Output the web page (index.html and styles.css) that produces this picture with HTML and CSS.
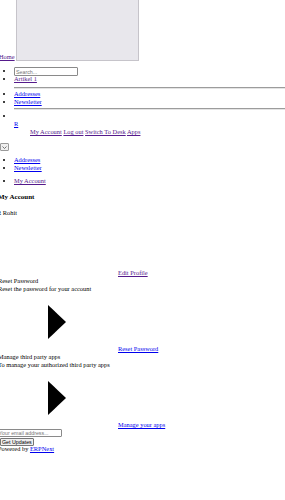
FILE: index.html
```html
<!DOCTYPE html>
<html lang="en">

<head>
  <meta charset="UTF-8" />
  <meta name="viewport" content="width=device-width, initial-scale=1.0" />
  <title>My Account</title>
  <link rel="stylesheet" href="styles.css">
</head>

<body>

  <div class="top">
    <a href="#" class="visited home">Home</a>
    <div class="banner"></div>
  </div>

  <ul class="nav first">
    <li class="search-item"><input type="text" class="search" placeholder="Search..." /></li>
    <li><a href="#" class="visited">Artikel 1</a></li>
  </ul>
  <div class="rule"></div>

  <ul class="nav links">
    <li><a href="#">Addresses</a></li>
    <li><a href="#">Newsletter</a></li>
  </ul>
  <div class="rule second"></div>

  <ul class="nav user">
    <li>
      <br>
      <a href="#">R</a>
      <ul class="user-menu">
        <li>
          <a href="#" class="visited">My Account</a>
          <a href="#" class="visited">Log out</a>
          <a href="#" class="visited">Switch To Desk</a>
          <a href="#" class="visited">Apps</a>
        </li>
      </ul>
    </li>
  </ul>

  <div class="select">
    <svg width="5" height="3" viewBox="0 0 5 3"><path d="M0.5 0.5 L2.5 2.5 L4.5 0.5" fill="none" stroke="#555" stroke-width="0.8" /></svg>
  </div>

  <ul class="nav side">
    <li><a href="#">Addresses</a></li>
    <li><a href="#">Newsletter</a></li>
  </ul>

  <ul class="nav crumbs">
    <li><a href="#" class="visited">My Account</a></li>
  </ul>

  <div class="main">
    <h3 class="title">My Account</h3>

    <div class="card">
      <div class="name">R Rohit</div>
      <div class="row">
        <svg class="icon" width="119" height="60"></svg>
        <a href="#" class="visited">Edit Profile</a>
      </div>
    </div>

    <div class="card">
      <div>Reset Password</div>
      <div>Reset the password for your account</div>
      <div class="row">
        <svg class="icon" width="119" height="60" viewBox="0 0 119 60"><polygon points="50,12 68,29 50,46" fill="#000" /></svg>
        <a href="#">Reset Password</a>
      </div>
    </div>

    <div class="card">
      <div>Manage third party apps</div>
      <div>To manage your authorized third party apps</div>
      <div class="row">
        <svg class="icon" width="119" height="60" viewBox="0 0 119 60"><polygon points="50,12 68,29 50,46" fill="#000" /></svg>
        <a href="#">Manage your apps</a>
      </div>
    </div>
  </div>

  <form class="footer">
    <input type="email" class="email" placeholder="Your email address..." />
    <button type="button" class="subscribe">Get Updates</button>
    <div class="powered">Powered by <a href="#">ERPNext</a></div>
  </form>

</body>

</html>
```

FILE: styles.css
```css
body {
  margin: 0;
  font-family: "Liberation Serif", "Times New Roman", serif;
  font-size: 6.4px;
  line-height: 8px;
  color: #000;
  background-color: #fff;
  overflow: hidden;
}

a {
  color: #0000ee;
}

a.visited {
  color: #551a8b;
}

.top {
  display: flex;
  align-items: flex-end;
  gap: 1px;
  height: 61px;
}

.home {
  margin-left: -1px;
}

.banner {
  width: 121px;
  height: 60px;
  background-color: #e8e7ec;
  border: 1px solid #c6c4ca;
  border-top: none;
}

.nav {
  margin: 0;
  padding-left: 14px;
}

.nav.first {
  margin-top: 6px;
}

.search-item {
  height: 8px;
}

.search {
  box-sizing: border-box;
  width: 64px;
  height: 9px;
  padding: 0 1px;
  vertical-align: top;
  font-family: "Liberation Sans", Arial, sans-serif;
  font-size: 5.3px;
  border: 1px solid #8a8a8a;
  border-radius: 1px;
}

.search::placeholder {
  color: #757575;
}

.rule {
  margin: 4px 0 0 14px;
  border-top: 1px solid #9c9c9c;
  border-bottom: 1px solid #e4e4e4;
}

.rule.second {
  margin-top: 2px;
}

.nav.links {
  margin-top: 1px;
}

.nav.user {
  margin-top: 2px;
}

.user-menu {
  margin: 0;
  padding-left: 16px;
  list-style: none;
}

.select {
  box-sizing: border-box;
  display: flex;
  align-items: center;
  justify-content: center;
  width: 9px;
  height: 8px;
  margin-top: 7px;
  background-color: #efefef;
  border: 1px solid #9a9a9a;
  border-radius: 1px;
}

.nav.side {
  margin-top: 5px;
}

.nav.crumbs {
  margin-top: 5px;
}

.main {
  margin-left: -2px;
}

.title {
  margin: 8px 0 8px;
  font-size: 7px;
  line-height: 8px;
  font-weight: bold;
}

.name {
  margin-left: -1px;
}

.row {
  display: flex;
  align-items: flex-end;
  gap: 1px;
  height: 60px;
}

.icon {
  display: block;
  flex-shrink: 0;
}

.footer {
  margin: 0 0 0 -3px;
}

.email {
  box-sizing: border-box;
  display: block;
  width: 65px;
  height: 8px;
  padding: 0 1px;
  font-family: "Liberation Sans", Arial, sans-serif;
  font-size: 5.3px;
  border: 1px solid #8a8a8a;
  border-radius: 1px;
}

.email::placeholder {
  color: #757575;
}

.subscribe {
  box-sizing: border-box;
  display: block;
  height: 8px;
  margin: 1px 0 0 3px;
  padding: 0 1px;
  font-family: "Liberation Sans", Arial, sans-serif;
  font-size: 5.3px;
  line-height: 6px;
  color: #000;
  background-color: #efefef;
  border: 1px solid #767676;
  border-radius: 1px;
}

.powered {
  margin-top: -1px;
  margin-left: 1px;
}
```
